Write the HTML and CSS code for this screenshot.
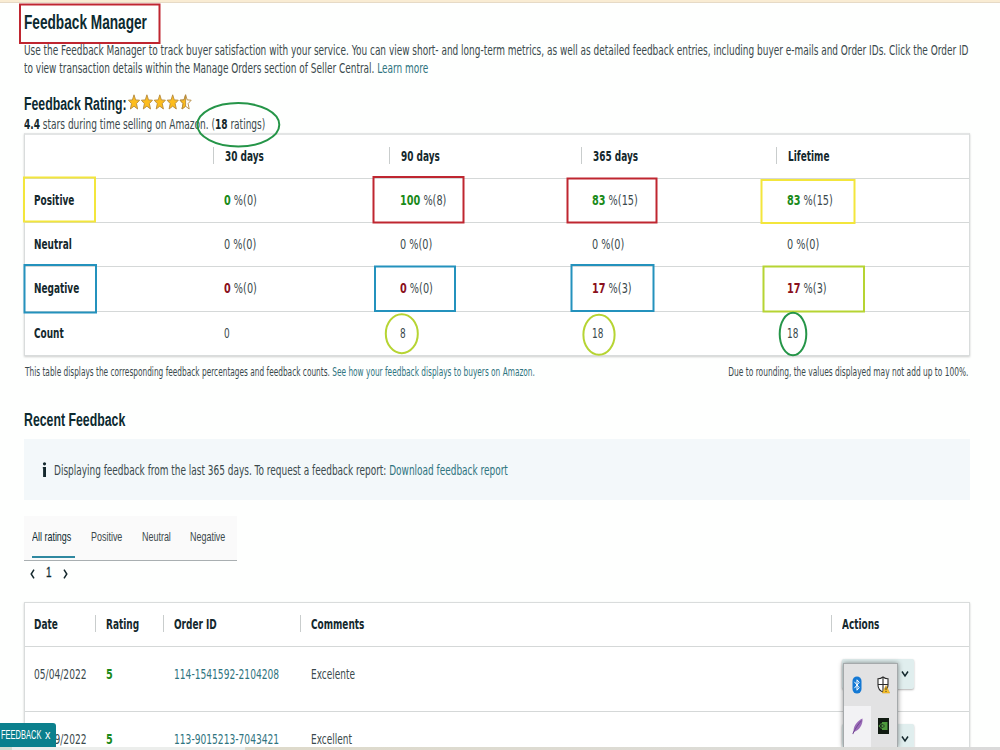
FILE: index.html
```
<!DOCTYPE html>
<html lang="en">
<head>
    <meta charset="UTF-8">
    <meta name="viewport" content="width=device-width, initial-scale=1.0">
    <title>Feedback Manager</title>
    <link rel="stylesheet" href="styles.css">
</head>
<body>

<svg class="defs" width="0" height="0">
    <defs>
        <path id="star" d="M6 0.8 L7.6 5.9 L11.6 6.2 L8.5 9.6 L9.6 15 L6 12.2 L2.4 15 L3.5 9.6 L0.4 6.2 L4.4 5.9 Z"/>
        <path id="star-half" d="M6 0.8 L6 12.2 L2.4 15 L3.5 9.6 L0.4 6.2 L4.4 5.9 Z"/>
    </defs>
</svg>

<div class="top-bar"></div>

<main class="page">
    <h1><span class="t">Feedback Manager</span></h1>
    <p class="intro">
        <span class="t">Use the Feedback Manager to track buyer satisfaction with your service. You can view short- and long-term metrics, as well as detailed feedback entries, including buyer e-mails and Order IDs. Click the Order ID</span>
        <span class="t">to view transaction details within the Manage Orders section of Seller Central. <a href="#">Learn more</a></span>
    </p>

    <div class="rating-title">
        <h2><span class="t">Feedback Rating:</span></h2>
        <svg class="stars" width="66" height="16" viewBox="0 0 66 16">
            <g fill="#fdbd1c" stroke="#b58a3c" stroke-width="0.9">
                <use href="#star" x="0"/>
                <use href="#star" x="12.9"/>
                <use href="#star" x="25.8"/>
                <use href="#star" x="38.7"/>
                <use href="#star" x="51.6" fill="#fff"/>
                <use href="#star-half" x="51.6"/>
            </g>
        </svg>
    </div>
    <p class="rating-text"><span class="t"><b>4.4</b> stars during time selling on Amazon. (<b>18</b> ratings)</span></p>

    <section class="card summary">
        <div class="row head">
            <div></div>
            <div class="sep"><span class="t">30 days</span></div>
            <div class="sep"><span class="t">90 days</span></div>
            <div class="sep"><span class="t">365 days</span></div>
            <div class="sep"><span class="t">Lifetime</span></div>
        </div>
        <div class="row">
            <div class="label"><span class="t">Positive</span></div>
            <div><span class="t num"><b class="good">0</b> %(0)</span></div>
            <div><span class="t num"><b class="good">100</b> %(8)</span></div>
            <div><span class="t num"><b class="good">83</b> %(15)</span></div>
            <div><span class="t num"><b class="good">83</b> %(15)</span></div>
        </div>
        <div class="row">
            <div class="label"><span class="t">Neutral</span></div>
            <div><span class="t num"><b class="flat">0</b> %(0)</span></div>
            <div><span class="t num"><b class="flat">0</b> %(0)</span></div>
            <div><span class="t num"><b class="flat">0</b> %(0)</span></div>
            <div><span class="t num"><b class="flat">0</b> %(0)</span></div>
        </div>
        <div class="row negative">
            <div class="label"><span class="t">Negative</span></div>
            <div><span class="t num"><b class="bad">0</b> %(0)</span></div>
            <div><span class="t num"><b class="bad">0</b> %(0)</span></div>
            <div><span class="t num"><b class="bad">17</b> %(3)</span></div>
            <div><span class="t num"><b class="bad">17</b> %(3)</span></div>
        </div>
        <div class="row">
            <div class="label"><span class="t">Count</span></div>
            <div><span class="t">0</span></div>
            <div><span class="t">8</span></div>
            <div><span class="t">18</span></div>
            <div><span class="t">18</span></div>
        </div>
    </section>

    <div class="notes">
        <span class="t">This table displays the corresponding feedback percentages and feedback counts. <a href="#">See how your feedback displays to buyers on Amazon.</a></span>
        <span class="t right">Due to rounding, the values displayed may not add up to 100%.</span>
    </div>

    <h2 class="recent-title"><span class="t">Recent Feedback</span></h2>

    <div class="info">
        <svg width="5" height="16" viewBox="0 0 5 16" fill="#14282d">
            <circle cx="2.5" cy="1.8" r="1.6"/>
            <path d="M0.8 5h3.2v10H1.1V6.4H0.8z"/>
        </svg>
        <span class="t">Displaying feedback from the last 365 days. To request a feedback report: <a href="#">Download feedback report</a></span>
    </div>

    <nav class="tabs">
        <div class="tab active"><span class="t">All ratings</span></div>
        <div class="tab"><span class="t">Positive</span></div>
        <div class="tab"><span class="t">Neutral</span></div>
        <div class="tab"><span class="t">Negative</span></div>
    </nav>

    <div class="pager">
        <svg width="5" height="10" viewBox="0 0 5 10"><path d="M4 0.6 L1.2 5 L4 9.4"/></svg>
        <span class="t">1</span>
        <svg width="5" height="10" viewBox="0 0 5 10"><path d="M1 0.6 L3.8 5 L1 9.4"/></svg>
    </div>

    <section class="card feedback">
        <div class="row head">
            <div><span class="t">Date</span></div>
            <div class="sep"><span class="t">Rating</span></div>
            <div class="sep"><span class="t">Order ID</span></div>
            <div class="sep"><span class="t">Comments</span></div>
            <div class="sep"><span class="t">Actions</span></div>
        </div>
        <div class="row">
            <div><span class="t digits">05/04/2022</span></div>
            <div><span class="t num"><b class="good">5</b></span></div>
            <div><span class="t digits"><a href="#">114-1541592-2104208</a></span></div>
            <div><span class="t">Excelente</span></div>
            <div class="action">
                <div class="select"><svg width="8" height="8" viewBox="0 0 8 8"><path d="M1 1.5 L4 6 L7 1.5"/></svg></div>
            </div>
        </div>
        <div class="row">
            <div><span class="t digits">04/29/2022</span></div>
            <div><span class="t num"><b class="good">5</b></span></div>
            <div><span class="t digits"><a href="#">113-9015213-7043421</a></span></div>
            <div><span class="t">Excellent</span></div>
            <div class="action">
                <div class="select"><svg width="8" height="8" viewBox="0 0 8 8"><path d="M1 1.5 L4 6 L7 1.5"/></svg></div>
            </div>
        </div>
    </section>
</main>

<!-- highlight marks over the tables -->
<svg class="marks" width="1000" height="380" viewBox="0 0 1000 380">
    <g class="red">
        <rect x="20" y="4.5" width="139.5" height="38.5"/>
        <rect x="373.5" y="177" width="90" height="45.5"/>
        <rect x="567.5" y="178.5" width="89" height="44"/>
    </g>
    <g class="yellow">
        <rect x="24" y="177.5" width="71" height="44"/>
        <rect x="761.5" y="180" width="93" height="43"/>
    </g>
    <g class="blue">
        <rect x="24.5" y="265" width="71.5" height="47.5"/>
        <rect x="375" y="266.5" width="80" height="44.5"/>
        <rect x="571.5" y="265" width="82" height="46"/>
    </g>
    <g class="lime">
        <rect x="763.5" y="266.5" width="100.5" height="45"/>
        <ellipse cx="401.8" cy="333.7" rx="16" ry="19.5"/>
        <ellipse cx="599" cy="334.7" rx="15.6" ry="20"/>
    </g>
    <g class="green">
        <ellipse cx="238.3" cy="124.8" rx="41" ry="21.7"/>
        <ellipse cx="793" cy="334" rx="13.3" ry="21.3"/>
    </g>
</svg>

<div class="tray">
    <div class="tray-cell">
        <svg width="10" height="18" viewBox="0 0 10 18">
            <rect x="0.5" y="0.5" width="9" height="17" rx="4.5" fill="#1479d4"/>
            <path d="M2.4 5.8 L7.2 11.6 L5 14.2 V3.8 L7.2 6.4 L2.4 12.2" fill="none" stroke="#fff" stroke-width="1"/>
        </svg>
    </div>
    <div class="tray-cell">
        <svg width="13" height="18" viewBox="0 0 13 18">
            <path d="M6 1 C4.5 2.2 2.7 2.8 1 2.8 V9 C1 12 3 14.8 6 16 C9 14.8 11 12 11 9 V2.8 C9.3 2.8 7.5 2.2 6 1 Z" fill="#fff" stroke="#2b2b2b" stroke-width="1.1"/>
            <path d="M6 1 V16 M1 8.5 H11" stroke="#2b2b2b" stroke-width="1.1"/>
            <path d="M9 9.5 L12.7 17 H5.3 Z" fill="#f7c22c" stroke="#d69a12" stroke-width="0.5"/>
            <path d="M9 11.5 V14.2 M9 15 V16" stroke="#2b2b2b" stroke-width="0.9"/>
        </svg>
    </div>
    <div class="tray-cell lit">
        <svg width="11" height="17" viewBox="0 0 11 17">
            <path d="M10.5 0.5 C6 2.5 2 7 1.5 12.5 L0.4 16 L1.2 16.2 L2.4 13.8 C7 12.5 11 7 10.5 0.5 Z" fill="#9a6bb8"/>
            <path d="M1 15.5 C3.5 10 6.5 6 9.6 2.6" fill="none" stroke="#5f3a80" stroke-width="0.7"/>
        </svg>
    </div>
    <div class="tray-cell">
        <svg width="11" height="16" viewBox="0 0 11 16">
            <rect width="11" height="16" fill="#111b12"/>
            <rect x="4" y="4" width="5.5" height="8" fill="#4d9a3c"/>
            <path d="M1 8 C2.5 5 5.5 5 7.5 8 C5.5 11 2.5 11 1 8 Z" fill="#1c331b" stroke="#5aa548" stroke-width="0.9"/>
            <circle cx="4.6" cy="8" r="1.1" fill="#5aa548"/>
        </svg>
    </div>
</div>

<div class="feedback-btn"><span class="t">FEEDBACK</span><span class="t close">x</span></div>
<div class="bottom-bar"></div>

</body>
</html>
```
FILE: styles.css
```
body {
    margin: 0;
    height: 750px;
    overflow: hidden;
    position: relative;
    background-color: #fefffe;
    font-family: "DejaVu Sans", sans-serif;
    font-size: 13.5px;
    color: #3a494c;
}

h1, h2, p {
    margin: 0;
}

a {
    color: #2f7480;
    text-decoration: none;
}

.defs {
    display: block;
}

/* narrow text */
.t {
    display: inline-block;
    white-space: nowrap;
    transform: scaleX(0.663);
    transform-origin: left center;
}

.t.num {
    transform: scaleX(0.72);
}

.t.digits {
    transform: scaleX(0.675);
}

.top-bar {
    height: 2px;
    background-color: #f9ecd3;
    border-bottom: 1px solid #e6dac6;
}

.page {
    width: 946px;
    margin-left: 24px;
}

h1, h2 {
    font-family: "Liberation Sans", sans-serif;
    color: #0c2a30;
}

h1 {
    height: 38px;
    line-height: 38px;
    font-size: 19.5px;
}

h1 .t {
    transform: scaleX(0.7);
}

h2 {
    font-size: 18px;
}

h2 .t {
    transform: scaleX(0.684);
}

.intro {
    height: 37px;
    line-height: 18px;
    display: flex;
    flex-direction: column;
    align-items: flex-start;
}

.rating-title {
    height: 22px;
    margin-top: 15px;
    display: grid;
    grid-template-columns: 104px 66px;
}

.rating-title h2 {
    line-height: 22px;
}

.stars {
    margin-top: 1px;
}

.rating-text {
    height: 18px;
    line-height: 18px;
}

.rating-text .t {
    transform: scaleX(0.668);
}

.rating-text b {
    color: #14282d;
}

.card {
    box-sizing: border-box;
    border: 1px solid #d9dcdc;
    background-color: #fff;
    box-shadow: 0 1px 2px rgba(0, 0, 0, 0.2);
}

.row {
    display: grid;
    align-items: center;
    box-sizing: border-box;
    height: 44px;
    padding-bottom: 2px;
    border-bottom: 1px solid #d5d8d8;
}

.row:last-child {
    border-bottom: none;
}

.summary {
    height: 223px;
    border-top: 2px solid #e3e5e5;
}

.summary .row {
    grid-template-columns: 188px 176px 192px 195px 1fr;
}

.summary .row > div {
    padding-left: 11px;
}

.summary .row > .sep {
    padding-left: 11.7px;
}

.summary .row > .label {
    padding-left: 9px;
}

.summary .negative {
    height: 45px;
}

.row.head,
.label {
    font-weight: bold;
    color: #14282d;
}

.sep {
    position: relative;
}

.sep::before {
    content: "";
    position: absolute;
    left: 0;
    top: 50%;
    height: 17px;
    margin-top: -9px;
    border-left: 1px solid #c9cdcd;
}

.good {
    color: #1a8a1a;
}

.bad {
    color: #8a0f1c;
}

.flat {
    font-weight: normal;
}

.notes {
    display: grid;
    grid-template-columns: minmax(0, 1fr) minmax(0, 1fr);
    margin: 7px 2px 0 1px;
    height: 18px;
    line-height: 18px;
    font-size: 11.5px;
}

.notes .t {
    justify-self: start;
    transform: scaleX(0.643);
}

.notes .t.right {
    justify-self: end;
    transform: scaleX(0.65);
    transform-origin: right center;
}

.recent-title {
    height: 24px;
    margin-top: 26px;
    line-height: 26px;
}

.info {
    display: flex;
    align-items: center;
    box-sizing: border-box;
    height: 61px;
    margin-top: 8px;
    padding-left: 18px;
    gap: 7px;
    background-color: #f3f8fa;
}

.tabs {
    display: grid;
    grid-template-columns: 43px 35px 32px 40px;
    column-gap: 16px;
    box-sizing: border-box;
    width: 213px;
    height: 45px;
    margin-top: 16px;
    padding-left: 8px;
    background-color: #fafafa;
    border-bottom: 1px solid #a9afb1;
    font-family: "Liberation Sans", sans-serif;
}

.tab {
    box-sizing: border-box;
    height: 42px;
    line-height: 42px;
}

.tab.active {
    color: #0c2a30;
    border-bottom: 2px solid #2f88a0;
}

.pager {
    display: grid;
    grid-template-columns: 16px 17px 5px;
    align-items: center;
    height: 25px;
    margin-left: 6px;
    color: #0c2a30;
    font-family: "Liberation Sans", sans-serif;
    font-size: 15px;
}

.pager .t {
    justify-self: start;
    padding-bottom: 5px;
    -webkit-text-stroke: 0.3px #0c2a30;
}

.pager path,
.select path {
    fill: none;
    stroke: #14282d;
    stroke-width: 1.5;
}

.feedback {
    height: 170px;
    margin-top: 16px;
}

.feedback .row {
    grid-template-columns: 70px 68px 137px 531px 1fr;
    height: 65px;
    padding-bottom: 11px;
}

.feedback .row > div {
    padding-left: 11px;
}

.feedback .row > div:first-child {
    padding-left: 9px;
}

.feedback .row.head {
    height: 44px;
    padding-bottom: 2px;
}

.select {
    display: flex;
    align-items: center;
    justify-content: flex-end;
    box-sizing: border-box;
    width: 72px;
    height: 30px;
    padding-right: 5px;
    border-radius: 2px;
    background-color: #e0eeee;
    box-shadow: 0 1px 2px rgba(0, 0, 0, 0.3);
}

.marks {
    position: absolute;
    left: 0;
    top: 0;
    fill: none;
    stroke-width: 2;
}

.red { stroke: #bf2630; }
.yellow { stroke: #f3e63c; }
.blue { stroke: #2492bd; }
.lime { stroke: #b6d433; }
.green { stroke: #259548; }

.tray {
    position: absolute;
    left: 843px;
    top: 663px;
    width: 55px;
    height: 84px;
    display: grid;
    grid-template-columns: 1fr 1fr;
    grid-template-rows: 1fr 1fr;
    background-color: #e2e2e3;
    border: 1px solid #a5a9ab;
    border-bottom: none;
    box-sizing: border-box;
    box-shadow: 0 0 5px rgba(0, 0, 0, 0.45);
}

.tray-cell {
    display: flex;
    align-items: center;
    justify-content: center;
}

.tray-cell.lit {
    background-color: #f2f2f4;
}

.feedback-btn {
    position: absolute;
    left: 0;
    top: 723px;
    width: 56px;
    height: 24px;
    display: grid;
    grid-template-columns: 44px 8px;
    box-sizing: border-box;
    padding-left: 1px;
    border-top-right-radius: 3px;
    background-color: #0b808d;
    color: #fff;
    font-family: "Liberation Sans", sans-serif;
    font-size: 12px;
    line-height: 24px;
}

.feedback-btn .t {
    justify-self: start;
    transform: scaleX(0.625);
}

.feedback-btn .close {
    transform: scaleX(0.9);
}

.bottom-bar {
    position: absolute;
    left: 0;
    right: 0;
    top: 747px;
    height: 3px;
    background: linear-gradient(to right, #d3dcd0 12px, #eceeec 12px, #eceeec 245px, #dedaca 245px, #dcdcd8 800px, #dadada);
}
```
